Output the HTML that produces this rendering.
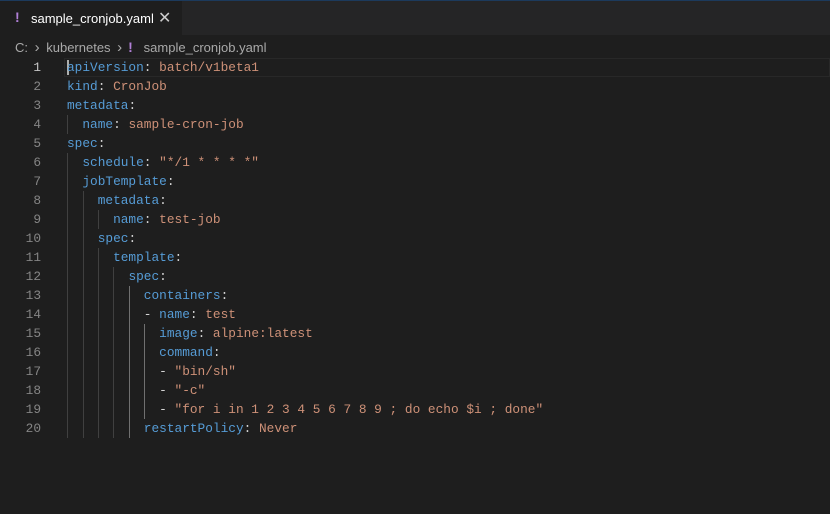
<!DOCTYPE html>
<html><head><meta charset="utf-8"><style>
*{margin:0;padding:0;box-sizing:border-box}
body{width:830px;height:514px;background:#1e1e1e;overflow:hidden;font-family:"Liberation Sans",sans-serif;position:relative}
.tabs{position:absolute;left:0;top:0;width:830px;height:35px;background:#252526;border-top:1px solid #1c3a5c}
.tab{position:absolute;left:0;top:0;width:182px;height:35px;background:#1e1e1e;color:#fff;font-size:13px}
.ex{position:absolute;color:#b180d7;font-weight:bold;font-size:14px}
.crumb{position:absolute;top:39px;left:15px;font-size:13px;color:#a9a9a9;white-space:nowrap}
.code{position:absolute;left:0;top:58px;font-family:"Liberation Mono",monospace;font-size:12.8px}
.ln{position:absolute;left:0;width:41px;text-align:right;color:#858585;height:19px;line-height:19px}
.l{position:absolute;left:67px;height:19px;line-height:19px;white-space:pre;color:#d4d4d4}
.k{color:#569cd6}.v{color:#ce9178}
.g{position:absolute;width:1px;background:#404040}
.ga{background:#707070}
</style></head><body>
<div class="tabs"><div class="tab"><span class="ex" style="left:15px;top:8px">!</span><span style="position:absolute;left:31px;top:10px">sample_cronjob.yaml</span><span style="position:absolute;left:158px;top:7px;font-size:16px;color:#ccc">✕</span></div></div>
<div class="crumb">C: <span style="margin:0 3px;font-size:15px">›</span> kubernetes <span style="margin:0 6px 0 3px;font-size:15px">›</span><span style="color:#b180d7;font-weight:bold;font-size:14px">!</span>&nbsp;&nbsp;&nbsp;sample_cronjob.yaml</div>
<div style="position:absolute;left:64px;top:58px;width:766px;height:19px;border:1px solid #282828"></div>
<div style="position:absolute;left:67px;top:60px;width:2px;height:15px;background:#aeafad"></div>
<div class="code">
<div class="g" style="left:67px;top:57px;height:19px"></div>
<div class="g" style="left:67px;top:95px;height:285px"></div>
<div class="g" style="left:83px;top:133px;height:247px"></div>
<div class="g" style="left:98px;top:152px;height:19px"></div>
<div class="g" style="left:98px;top:190px;height:190px"></div>
<div class="g" style="left:113px;top:209px;height:171px"></div>
<div class="g ga" style="left:129px;top:228px;height:152px"></div>
<div class="g ga" style="left:144px;top:266px;height:95px"></div>
</div>
<div class="code" style="width:830px">
<div class="ln" style="top:0;color:#c6c6c6">1</div><div class="l" style="top:0"><span class="k">apiVersion</span>: <span class="v">batch/v1beta1</span></div>
<div class="ln" style="top:19px">2</div><div class="l" style="top:19px"><span class="k">kind</span>: <span class="v">CronJob</span></div>
<div class="ln" style="top:38px">3</div><div class="l" style="top:38px"><span class="k">metadata</span>:</div>
<div class="ln" style="top:57px">4</div><div class="l" style="top:57px">  <span class="k">name</span>: <span class="v">sample-cron-job</span></div>
<div class="ln" style="top:76px">5</div><div class="l" style="top:76px"><span class="k">spec</span>:</div>
<div class="ln" style="top:95px">6</div><div class="l" style="top:95px">  <span class="k">schedule</span>: <span class="v">"*/1 * * * *"</span></div>
<div class="ln" style="top:114px">7</div><div class="l" style="top:114px">  <span class="k">jobTemplate</span>:</div>
<div class="ln" style="top:133px">8</div><div class="l" style="top:133px">    <span class="k">metadata</span>:</div>
<div class="ln" style="top:152px">9</div><div class="l" style="top:152px">      <span class="k">name</span>: <span class="v">test-job</span></div>
<div class="ln" style="top:171px">10</div><div class="l" style="top:171px">    <span class="k">spec</span>:</div>
<div class="ln" style="top:190px">11</div><div class="l" style="top:190px">      <span class="k">template</span>:</div>
<div class="ln" style="top:209px">12</div><div class="l" style="top:209px">        <span class="k">spec</span>:</div>
<div class="ln" style="top:228px">13</div><div class="l" style="top:228px">          <span class="k">containers</span>:</div>
<div class="ln" style="top:247px">14</div><div class="l" style="top:247px">          - <span class="k">name</span>: <span class="v">test</span></div>
<div class="ln" style="top:266px">15</div><div class="l" style="top:266px">            <span class="k">image</span>: <span class="v">alpine:latest</span></div>
<div class="ln" style="top:285px">16</div><div class="l" style="top:285px">            <span class="k">command</span>:</div>
<div class="ln" style="top:304px">17</div><div class="l" style="top:304px">            - <span class="v">"bin/sh"</span></div>
<div class="ln" style="top:323px">18</div><div class="l" style="top:323px">            - <span class="v">"-c"</span></div>
<div class="ln" style="top:342px">19</div><div class="l" style="top:342px">            - <span class="v">"for i in 1 2 3 4 5 6 7 8 9 ; do echo $i ; done"</span></div>
<div class="ln" style="top:361px">20</div><div class="l" style="top:361px">          <span class="k">restartPolicy</span>: <span class="v">Never</span></div>
</div>
</body></html>
